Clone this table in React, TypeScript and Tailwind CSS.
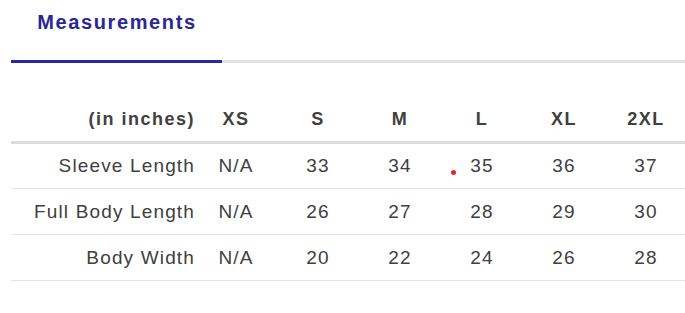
const SIZES = ['XS', 'S', 'M', 'L', 'XL', '2XL'];

const ROWS = [
  { label: 'Sleeve Length', values: ['N/A', '33', '34', '35', '36', '37'], h: 'h-[45px]' },
  { label: 'Full Body Length', values: ['N/A', '26', '27', '28', '29', '30'], h: 'h-[46px]' },
  { label: 'Body Width', values: ['N/A', '20', '22', '24', '26', '28'], h: 'h-[46px]' },
];

export default function App() {
  return (
    <div className="h-[313px] w-[685px] overflow-hidden bg-white font-['Liberation_Sans',Arial,sans-serif]">
      {/* tabs */}
      <div className="flex pl-[11px]">
        <div className="flex h-[63px] w-[211px] flex-col">
          <div className="flex-1 pt-[8px] pl-[1px] text-center text-[20px] leading-[28px] font-bold tracking-[1.6px] text-[#2a2796]">
            Measurements
          </div>
          <div className="h-[3px] bg-[#2c28a0]" />
        </div>
        <div className="flex flex-1 flex-col justify-end">
          <div className="h-[3px] bg-[#e1e0e6]" />
        </div>
      </div>

      {/* table */}
      <div className="ml-[11px] mt-[33px] w-[676px] text-[#404040]">
        <div className="grid h-[48px] grid-cols-[184px_repeat(6,82px)] items-center border-b-[3px] border-[#dcdce0] text-[18px] leading-[28px] font-bold tracking-[1.5px]">
          <div className="text-right">(in inches)</div>
          {SIZES.map((s) => (
            <div className="text-center" key={s}>
              {s}
            </div>
          ))}
        </div>
        {ROWS.map((row, i) => (
          <div
            className={`grid ${row.h} grid-cols-[184px_repeat(6,82px)] items-center border-b border-[#e2e2e2] text-[19px] leading-[28px] tracking-[1.15px]`}
            key={row.label}
          >
            <div className="text-right">{row.label}</div>
            {row.values.map((v, j) => (
              <div className="relative text-center" key={j}>
                {i === 0 && j === 3 ? (
                  <span className="absolute top-[18px] left-[10px] size-[5px] rounded-full bg-[#e6262a]" />
                ) : null}
                {v}
              </div>
            ))}
          </div>
        ))}
      </div>
    </div>
  );
}
